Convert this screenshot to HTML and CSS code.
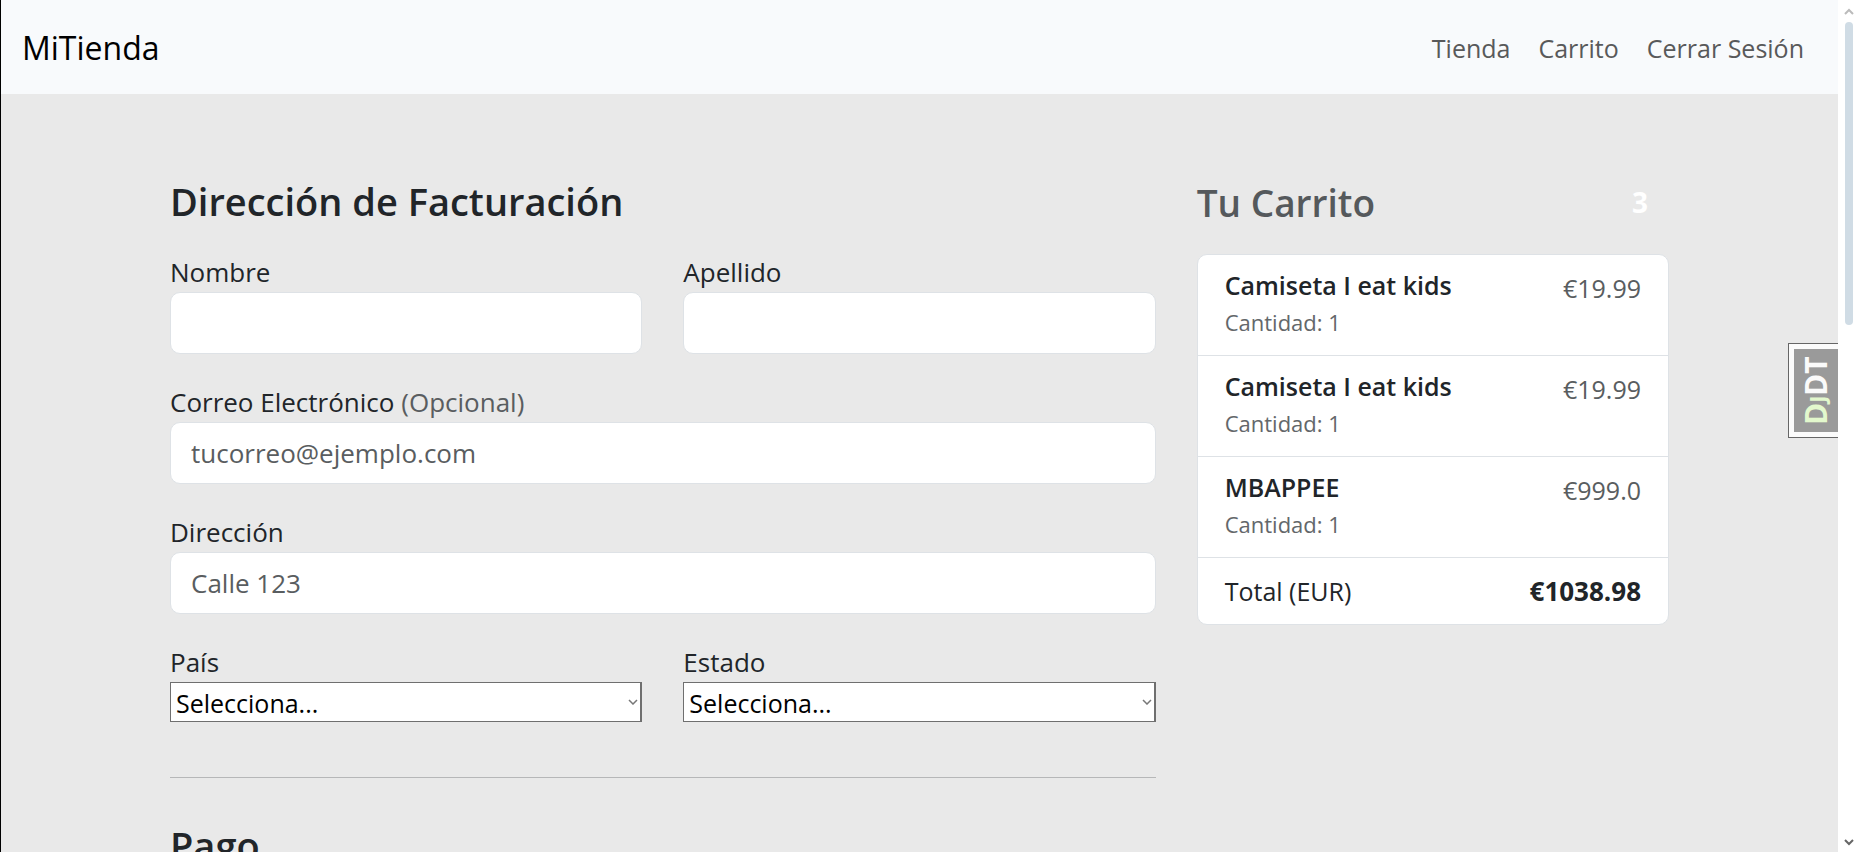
FILE: index.html
```html
<!DOCTYPE html>
<html lang="es">
<head>
<meta charset="utf-8">
<title>MiTienda</title>
<link rel="stylesheet" href="styles.css">
</head>
<body>
<div class="page">
  <nav class="navbar">
    <a class="brand" href="#">MiTienda</a>
    <div class="nav-links">
      <a href="#">Tienda</a>
      <a href="#">Carrito</a>
      <a href="#">Cerrar Sesión</a>
    </div>
  </nav>
  <main class="container">
    <form class="billing">
      <h2 class="heading">Dirección de Facturación</h2>
      <div class="fields">
        <div class="field">
          <label for="nombre">Nombre</label>
          <input class="control" id="nombre" type="text">
        </div>
        <div class="field">
          <label for="apellido">Apellido</label>
          <input class="control" id="apellido" type="text">
        </div>
        <div class="field wide">
          <label for="correo">Correo Electrónico <span class="muted">(Opcional)</span></label>
          <input class="control" id="correo" type="email" placeholder="tucorreo@ejemplo.com">
        </div>
        <div class="field wide">
          <label for="direccion">Dirección</label>
          <input class="control" id="direccion" type="text" placeholder="Calle 123">
        </div>
        <div class="field">
          <label for="pais">País</label>
          <div class="select-wrap">
            <select id="pais"><option>Selecciona...</option></select>
            <svg class="caret" viewBox="0 0 10 6"><path d="M1 1l4 4 4-4"/></svg>
          </div>
        </div>
        <div class="field">
          <label for="estado">Estado</label>
          <div class="select-wrap">
            <select id="estado"><option>Selecciona...</option></select>
            <svg class="caret" viewBox="0 0 10 6"><path d="M1 1l4 4 4-4"/></svg>
          </div>
        </div>
      </div>
      <hr class="divider">
      <h2 class="heading">Pago</h2>
    </form>
    <aside class="cart">
      <h2 class="cart-heading"><span>Tu Carrito</span><span class="badge">3</span></h2>
      <ul class="cart-list">
        <li><div><h3>Camiseta I eat kids</h3><small>Cantidad: 1</small></div><span class="muted">€19.99</span></li>
        <li><div><h3>Camiseta I eat kids</h3><small>Cantidad: 1</small></div><span class="muted">€19.99</span></li>
        <li><div><h3>MBAPPEE</h3><small>Cantidad: 1</small></div><span class="muted">€999.0</span></li>
        <li><span>Total (EUR)</span><strong>€1038.98</strong></li>
      </ul>
    </aside>
  </main>
</div>
<a class="debug-handle" href="#"><span class="debug-label"><span class="debug-green">D<span class="debug-small">J</span></span>DT</span></a>
<div class="scrollbar">
  <svg class="arrow up" viewBox="0 0 10 7"><path d="M1 6l4-4 4 4"/></svg>
  <div class="track"><div class="thumb"></div></div>
  <svg class="arrow down" viewBox="0 0 10 7"><path d="M1 1l4 4 4-4"/></svg>
</div>
</body>
</html>
```
FILE: styles.css
```css
* { box-sizing: border-box; }

body {
  margin: 0;
  height: 100vh;
  display: flex;
  overflow: hidden;
  position: relative;
  background: #e9e9e9;
  color: #212529;
  font-family: "Open Sans", "Noto Sans", sans-serif;
  font-size: 25px;
  line-height: 40px;
}

.page {
  flex: 1;
  min-width: 0;
  overflow: hidden;
  border-left: 1px solid #000;
}

.navbar {
  display: flex;
  align-items: center;
  justify-content: space-between;
  padding: 28px 34px 26px 21px;
  background: #f8fafc;
}

.navbar a { text-decoration: none; }
.brand { color: #000; font-size: 32px; }
.nav-links { display: flex; gap: 28px; }
.nav-links a { color: #58595a; }

.container {
  display: grid;
  grid-template-columns: repeat(3, minmax(0, 1fr));
  gap: 41px;
  max-width: 1499px;
  margin: 0 auto;
  padding-top: 82px;
}

.billing { grid-column: span 2; }

.heading {
  margin: 0 0 26px;
  font-size: 38px;
  font-weight: 600;
  line-height: 50px;
}

.fields {
  display: grid;
  grid-template-columns: repeat(2, minmax(0, 1fr));
  gap: 28px 41px;
}

.wide { grid-column: span 2; }
.field label { display: block; font-size: 26px; }
.muted { color: #595d60; }

.control {
  display: block;
  width: 100%;
  height: 62px;
  padding: 0 20px;
  border: 1px solid #dee2e6;
  border-radius: 10px;
  background: #fff;
  color: #212529;
  font: inherit;
  font-size: 26px;
}

.control::placeholder { color: #595d60; opacity: 1; }

.select-wrap { position: relative; }

.select-wrap select {
  display: block;
  width: 100%;
  height: 40px;
  padding: 0 5px;
  appearance: none;
  border: 1px solid #6f6f6f;
  border-right-width: 2px;
  border-radius: 0;
  background: #fff;
  color: #000;
  font: inherit;
}

.caret {
  position: absolute;
  right: 4px;
  top: 17px;
  width: 10px;
  height: 6px;
  fill: none;
  stroke: #777;
  stroke-width: 1.5;
}

.divider {
  height: 1px;
  margin: 55px 0 42px;
  border: 0;
  background: #b6b7b8;
}

.cart-heading {
  display: flex;
  align-items: center;
  justify-content: space-between;
  margin: 0 0 26px;
  padding: 2px 21px 0 0;
  color: #55595c;
  font-size: 37px;
  font-weight: 600;
  line-height: 50px;
}

.badge { color: #fff; font-size: 28px; font-weight: 700; line-height: 48px; align-self: flex-start; }

.cart-list {
  margin: 0;
  padding: 0;
  list-style: none;
  border: 1px solid #dee2e6;
  border-radius: 10px;
  background: #fff;
}

.cart-list li {
  display: flex;
  justify-content: space-between;
  padding: 13px 27px;
}

.cart-list li + li { border-top: 1px solid #dee2e6; }
.cart-list h3 { margin: 0; font-size: 25px; font-weight: 600; line-height: 34px; }
.cart-list small { display: block; color: #63676a; font-size: 22px; }
.cart-list strong { font-size: 26px; }

.debug-handle {
  position: absolute;
  top: 343px;
  right: 21px;
  width: 50px;
  height: 95px;
  padding: 5px 0 5px 5px;
  border: 1px solid #666;
  border-right: 0;
  background: #fbfbfb;
  text-decoration: none;
}

.debug-label {
  display: flex;
  align-items: center;
  justify-content: center;
  width: 100%;
  height: 100%;
  background: #9a9a9a;
  color: #fafafa;
  font-size: 30px;
  font-weight: 700;
  line-height: 44px;
  writing-mode: vertical-rl;
  transform: rotate(180deg);
}

.debug-green { color: #e3f8cd; }
.debug-small { font-size: 22px; }

.scrollbar {
  width: 21px;
  height: 100%;
  padding: 8px 6px 6px;
  display: flex;
  flex-direction: column;
  align-items: center;
  background: #fff;
}

.track { flex: 1; padding: 7px 0; }
.thumb { width: 8px; height: 303px; border-radius: 4px; background: #d0dce5; }
.arrow { width: 10px; height: 7px; fill: none; stroke-width: 2; }
.up { stroke: #bbb; }
.down { stroke: #666; }
```
